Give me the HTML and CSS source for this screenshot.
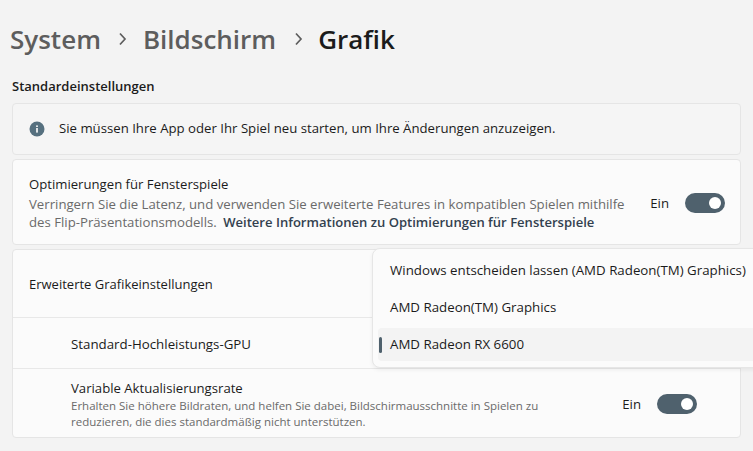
FILE: index.html
```html
<!DOCTYPE html>
<html lang="de">
<head>
    <meta charset="UTF-8">
    <meta name="viewport" content="width=device-width, initial-scale=1.0">
    <title>Grafik</title>
    <link rel="stylesheet" href="styles.css">
</head>
<body>
    <!-- Breadcrumb -->
    <h1 class="crumbs">
        <span>System</span>
        <svg class="chev" width="10" height="14" viewBox="0 0 10 14"><path d="M2 1.5 L7 7 L2 12.5" fill="none" stroke="#5d5d5d" stroke-width="1.7"/></svg>
        <span>Bildschirm</span>
        <svg class="chev next" width="10" height="14" viewBox="0 0 10 14"><path d="M2 1.5 L7 7 L2 12.5" fill="none" stroke="#5d5d5d" stroke-width="1.7"/></svg>
        <span class="current">Grafik</span>
    </h1>

    <h2 class="section">Standardeinstellungen</h2>

    <div class="card notice">
        <svg class="info-icon" width="16" height="16" viewBox="0 0 16 16">
            <circle cx="8" cy="8" r="7.5" fill="#56707f"/>
            <rect x="7.2" y="7" width="1.6" height="4.6" fill="#fff"/>
            <rect x="7.2" y="4.4" width="1.6" height="1.6" fill="#fff"/>
        </svg>
        <span>Sie müssen Ihre App oder Ihr Spiel neu starten, um Ihre Änderungen anzuzeigen.</span>
    </div>

    <div class="card row windowed">
        <div class="row-text">
            <div class="row-title">Optimierungen für Fensterspiele</div>
            <div class="row-desc">Verringern Sie die Latenz, und verwenden Sie erweiterte Features in kompatiblen Spielen mithilfe<br>des Flip-Präsentationsmodells. <b class="more">Weitere Informationen zu Optimierungen für Fensterspiele</b></div>
        </div>
        <span class="state">Ein</span>
        <span class="toggle"></span>
    </div>

    <div class="card group">
        <div class="group-row head">Erweiterte Grafikeinstellungen</div>
        <div class="group-row gpu">Standard-Hochleistungs-GPU</div>
        <div class="group-row vrr">
            <div class="row-text">
                <div class="row-title">Variable Aktualisierungsrate</div>
                <div class="row-small">Erhalten Sie höhere Bildraten, und helfen Sie dabei, Bildschirmausschnitte in Spielen zu<br>reduzieren, die dies standardmäßig nicht unterstützen.</div>
            </div>
            <span class="state">Ein</span>
            <span class="toggle"></span>
        </div>

        <!-- offenes Dropdown -->
        <div class="menu">
            <div class="menu-item">Windows entscheiden lassen (AMD Radeon(TM) Graphics)</div>
            <div class="menu-item">AMD Radeon(TM) Graphics</div>
            <div class="menu-item selected">AMD Radeon RX 6600</div>
        </div>
    </div>
</body>
</html>
```

FILE: styles.css
```css
html, body {
    height: 100%;
    overflow: hidden;
}
body {
    margin: 0;
    padding: 0 12px;
    background-color: #f3f3f3;
    color: #1b1b1b;
    font-family: "Open Sans", "Noto Sans", sans-serif;
    font-size: 13.2px;
}
.crumbs {
    display: flex;
    align-items: center;
    height: 78px;
    margin: 0 0 0 -2px;
    font-size: 26px;
    font-weight: 600;
    color: #5d5d5d;
}
.crumbs .chev {
    margin: 0 14.5px 0 17.5px;
}
.crumbs .next {
    margin: 0 14px 0 18px;
}
.crumbs .current {
    color: #1b1b1b;
}
.section {
    height: 25px;
    line-height: 16px;
    margin: 0;
    font-size: 13px;
    font-weight: 600;
}
.card {
    box-sizing: border-box;
    background-color: #fbfbfb;
    border: 1px solid #e5e5e5;
    border-radius: 4px;
    margin-bottom: 4px;
}
.notice {
    display: flex;
    align-items: center;
    height: 52px;
    padding: 0 0 2px 16px;
    background-color: #f5f5f5;
}
.info-icon {
    margin-right: 14px;
    margin-top: 1px;
}
.row {
    display: flex;
    align-items: center;
}
.windowed {
    height: 86px;
    padding: 2px 15px 0 16px;
}
.row-text {
    flex: 1;
}
.row-title {
    line-height: 18px;
    font-size: 13.15px;
}
.row-desc {
    margin-top: 2px;
    line-height: 18px;
    font-size: 13.2px;
    color: #6a6a6a;
}
.more {
    color: #33414f;
    font-weight: 600;
    font-size: 13.05px;
    margin-left: 3px;
}
.row-small {
    margin-top: 1px;
    font-size: 11.5px;
    line-height: 16px;
    color: #6a6a6a;
}
.state {
    margin-right: 16px;
}
.toggle {
    position: relative;
    width: 40px;
    height: 20px;
    border-radius: 10px;
    background-color: #4f616d;
}
.toggle::after {
    content: "";
    position: absolute;
    right: 4px;
    top: 4px;
    width: 12px;
    height: 12px;
    border-radius: 50%;
    background-color: #fff;
}
.group {
    position: relative;
    height: 189px;
}
.group-row {
    box-sizing: border-box;
    display: flex;
    align-items: center;
    border-bottom: 1px solid #e8e8e8;
}
.head {
    height: 68px;
    padding-left: 16px;
    font-size: 13px;
}
.gpu {
    height: 51px;
    padding: 2px 0 0 58px;
    font-size: 13.3px;
}
.vrr {
    height: 68px;
    padding: 2px 43px 0 58px;
    border-bottom: none;
}
.menu {
    position: absolute;
    left: 359px;
    top: -2px;
    width: 400px;
    height: 120px;
    box-sizing: border-box;
    padding: 3px 5px;
    background-color: #fbfbfb;
    border: 1px solid #e6e6e6;
    border-radius: 8px 0 0 8px;
    box-shadow: 0 2px 4px rgba(0, 0, 0, 0.06);
    font-size: 13.3px;
}
.menu-item {
    position: relative;
    display: flex;
    align-items: center;
    height: 37px;
    padding: 0 0 2px 12px;
    box-sizing: border-box;
    border-radius: 4px;
}
.selected {
    margin-top: 2px;
    height: 33px;
    background-color: #f3f3f3;
}
.selected::before {
    content: "";
    position: absolute;
    left: 1px;
    top: 9px;
    width: 3px;
    height: 16px;
    border-radius: 2px;
    background-color: #4f616d;
}
```
